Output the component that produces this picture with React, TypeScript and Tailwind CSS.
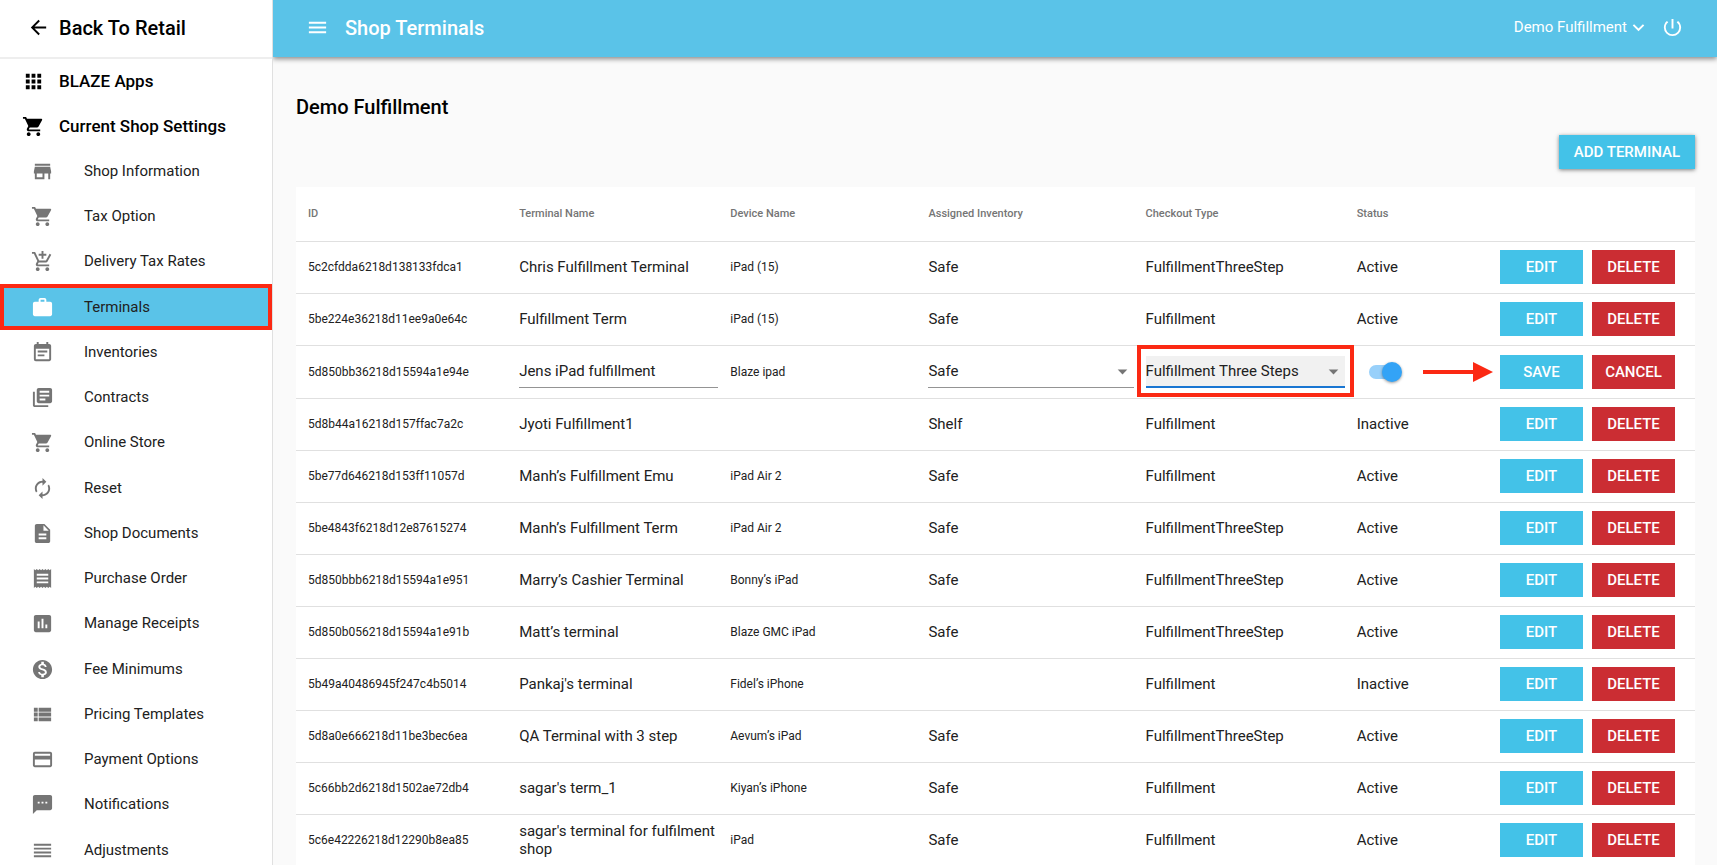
import { useState } from "react";
import type { IconType } from "react-icons";
import {
  MdAddShoppingCart,
  MdApps,
  MdArrowBack,
  MdArrowDropDown,
  MdAutorenew,
  MdDescription,
  MdEventNote,
  MdInsertChart,
  MdKeyboardArrowDown,
  MdLibraryBooks,
  MdMenu,
  MdMonetizationOn,
  MdPayment,
  MdPowerSettingsNew,
  MdReceipt,
  MdReorder,
  MdShoppingCart,
  MdStore,
  MdTextsms,
  MdViewList,
  MdWork,
} from "react-icons/md";

const NAV: { label: string; icon: IconType; active?: boolean }[] = [
  { label: "Shop Information", icon: MdStore },
  { label: "Tax Option", icon: MdShoppingCart },
  { label: "Delivery Tax Rates", icon: MdAddShoppingCart },
  { label: "Terminals", icon: MdWork, active: true },
  { label: "Inventories", icon: MdEventNote },
  { label: "Contracts", icon: MdLibraryBooks },
  { label: "Online Store", icon: MdShoppingCart },
  { label: "Reset", icon: MdAutorenew },
  { label: "Shop Documents", icon: MdDescription },
  { label: "Purchase Order", icon: MdReceipt },
  { label: "Manage Receipts", icon: MdInsertChart },
  { label: "Fee Minimums", icon: MdMonetizationOn },
  { label: "Pricing Templates", icon: MdViewList },
  { label: "Payment Options", icon: MdPayment },
  { label: "Notifications", icon: MdTextsms },
  { label: "Adjustments", icon: MdReorder },
];

const TERMINALS = [
  { id: "5c2cfdda6218d138133fdca1", name: "Chris Fulfillment Terminal", device: "iPad (15)", inventory: "Safe", checkout: "FulfillmentThreeStep", status: "Active" },
  { id: "5be224e36218d11ee9a0e64c", name: "Fulfillment Term", device: "iPad (15)", inventory: "Safe", checkout: "Fulfillment", status: "Active" },
  { id: "5d850bb36218d15594a1e94e", name: "Jens iPad fulfillment", device: "Blaze ipad", inventory: "Safe", checkout: "Fulfillment Three Steps", status: "Active" },
  { id: "5d8b44a16218d157ffac7a2c", name: "Jyoti Fulfillment1", device: "", inventory: "Shelf", checkout: "Fulfillment", status: "Inactive" },
  { id: "5be77d646218d153ff11057d", name: "Manh’s Fulfillment Emu", device: "iPad Air 2", inventory: "Safe", checkout: "Fulfillment", status: "Active" },
  { id: "5be4843f6218d12e87615274", name: "Manh’s Fulfillment Term", device: "iPad Air 2", inventory: "Safe", checkout: "FulfillmentThreeStep", status: "Active" },
  { id: "5d850bbb6218d15594a1e951", name: "Marry’s Cashier Terminal", device: "Bonny’s iPad", inventory: "Safe", checkout: "FulfillmentThreeStep", status: "Active" },
  { id: "5d850b056218d15594a1e91b", name: "Matt’s terminal", device: "Blaze GMC iPad", inventory: "Safe", checkout: "FulfillmentThreeStep", status: "Active" },
  { id: "5b49a40486945f247c4b5014", name: "Pankaj's terminal", device: "Fidel’s iPhone", inventory: "", checkout: "Fulfillment", status: "Inactive" },
  { id: "5d8a0e666218d11be3bec6ea", name: "QA Terminal with 3 step", device: "Aevum’s iPad", inventory: "Safe", checkout: "FulfillmentThreeStep", status: "Active" },
  { id: "5c66bb2d6218d1502ae72db4", name: "sagar's term_1", device: "Kiyan’s iPhone", inventory: "Safe", checkout: "Fulfillment", status: "Active" },
  { id: "5c6e42226218d12290b8ea85", name: "sagar's terminal for fulfilment shop", device: "iPad", inventory: "Safe", checkout: "Fulfillment", status: "Active" },
];

type Terminal = (typeof TERMINALS)[number];

const EDITING_ID = "5d850bb36218d15594a1e94e";

function Sidebar() {
  return (
    <aside className="relative z-20 w-[273px] shrink-0 overflow-hidden border-r border-[#e0e0e0] bg-white">
      <a href="#retail" className="flex h-[59px] items-center border-b-2 border-[#eeeeee] pb-0.5 pl-[27px] text-xl font-medium text-black">
        <MdArrowBack size={23} />
        <span className="ml-[9px]">Back To Retail</span>
      </a>
      <a href="#apps" className="flex h-[45px] items-center pl-[22px] text-[17px] font-medium text-black">
        <MdApps size={23} />
        <span className="ml-[14px]">BLAZE Apps</span>
      </a>
      <a href="#settings" className="flex h-[45px] items-center pl-[22px] text-[17px] font-medium text-black">
        <MdShoppingCart size={23} />
        <span className="ml-[14px]">Current Shop Settings</span>
      </a>
      <nav>
        <ul>
          {NAV.map(({ label, icon: Icon, active }) => (
            <li key={label} className="h-[45px] nth-[4n]:h-[46px]">
              <a
                href={`#${label.toLowerCase().replaceAll(" ", "-")}`}
                className={`relative flex h-full items-center pl-[31px] text-[15px] text-[#212121] ${active ? "bg-[#5ac3e8]" : ""}`}
              >
                <Icon size={23} className={active ? "text-white" : "text-[#757575]"} />
                <span className="ml-[30px]">{label}</span>
                {active && <span className="absolute inset-0 border-4 border-[#fb2913]" />}
              </a>
            </li>
          ))}
        </ul>
      </nav>
    </aside>
  );
}

function ActionButton({ label, danger }: { label: string; danger?: boolean }) {
  return (
    <button className={`h-[34px] w-[83px] text-[15px] font-medium text-white ${danger ? "bg-[#cb2d33]" : "bg-[#43c2e8]"}`}>
      {label}
    </button>
  );
}

function Actions({ editing }: { editing?: boolean }) {
  return (
    <div className="flex justify-end gap-[9px]">
      <ActionButton label={editing ? "SAVE" : "EDIT"} />
      <ActionButton label={editing ? "CANCEL" : "DELETE"} danger />
    </div>
  );
}

function Select({ label, options, focused }: { label: string; options: string[]; focused?: boolean }) {
  return (
    <div className="relative">
      <select
        aria-label={label}
        className={`block h-8 w-full appearance-none pr-6 text-[15px] outline-none ${
          focused ? "border-b-2 border-[#1976d2] bg-[#f1f1f1]" : "border-b border-[#949494]"
        }`}
      >
        {options.map((o) => <option key={o}>{o}</option>)}
      </select>
      <MdArrowDropDown size={23} className="pointer-events-none absolute top-1 right-0 text-[#757575]" />
    </div>
  );
}

function EditRow({ t }: { t: Terminal }) {
  const [name, setName] = useState(t.name);
  const [on, setOn] = useState(true);

  return (
    <tr className="h-[53px] border-b border-[#e0e0e0]">
      <td className="pl-3 text-xs">{t.id}</td>
      <td className="pl-3">
        <input
          aria-label="Terminal Name"
          value={name}
          onChange={(e) => setName(e.target.value)}
          className="block h-8 w-full border-b border-[#949494] text-[15px] outline-none"
        />
      </td>
      <td className="pl-3 text-xs">{t.device}</td>
      <td className="pl-3"><Select label="Assigned Inventory" options={["Safe", "Shelf"]} /></td>
      <td className="relative pl-3">
        <Select label="Checkout Type" options={["Fulfillment Three Steps", "Fulfillment"]} focused />
        <span className="pointer-events-none absolute -top-px -right-[9px] bottom-px left-[3px] z-10 border-4 border-[#fb2913]" />
      </td>
      <td className="relative pl-6">
        <label className="relative flex h-5 w-[34px] cursor-pointer items-center">
          <input type="checkbox" aria-label="Active" checked={on} onChange={() => setOn(!on)} className="peer sr-only" />
          <span className="h-[14px] w-7 rounded-full bg-[#bdbdbd] peer-checked:bg-[#98d0fa]" />
          <span className="absolute left-0 size-5 rounded-full bg-[#fafafa] shadow-[0_1px_3px_rgba(0,0,0,0.4)] peer-checked:left-[13px] peer-checked:bg-[#33a3f6]" />
        </label>
        <svg viewBox="0 0 70 20" className="pointer-events-none absolute top-4 -right-1 h-5 w-[70px]">
          <path d="M0 8h50V0l20 10-20 10v-8H0z" fill="#fb2913" />
        </svg>
      </td>
      <td className="pr-5"><Actions editing /></td>
    </tr>
  );
}

function Row({ t }: { t: Terminal }) {
  return (
    <tr className="h-[52px] border-b border-[#e0e0e0]">
      <td className="pl-3 text-xs">{t.id}</td>
      <td className="pl-3">{t.name}</td>
      <td className="pl-3 text-xs">{t.device}</td>
      <td className="pl-3">{t.inventory}</td>
      <td className="pl-3">{t.checkout}</td>
      <td className="pl-3">{t.status}</td>
      <td className="pr-5"><Actions /></td>
    </tr>
  );
}

export default function App() {
  return (
    <div className="flex h-screen overflow-hidden bg-[#fafafa] font-[Roboto,sans-serif] text-[#212121]">
      <Sidebar />
      <div className="flex min-w-0 flex-1 flex-col">
        <header className="z-10 flex h-[57px] shrink-0 items-center bg-[#5ac3e8] px-[33px] pb-0.5 text-white shadow-[0_2px_5px_rgba(0,0,0,0.45)]">
          <button aria-label="Menu"><MdMenu size={23} /></button>
          <h1 className="ml-4 text-xl font-medium">Shop Terminals</h1>
          <button className="ml-auto flex items-center text-[15px]">
            Demo Fulfillment
            <MdKeyboardArrowDown size={23} />
          </button>
          <button aria-label="Log out" className="ml-[11px]"><MdPowerSettingsNew size={23} /></button>
        </header>

        <main className="flex-1 overflow-y-auto pt-9 pr-[22px] pl-[23px] [scrollbar-width:none]">
          <h2 className="text-xl leading-7 font-medium text-black">Demo Fulfillment</h2>
          <div className="mt-[14px] mb-[18px] flex justify-end">
            <button className="h-[34px] bg-[#43c2e8] px-[15px] text-[15px] font-medium text-white shadow-[0_1px_4px_rgba(0,0,0,0.5)]">
              ADD TERMINAL
            </button>
          </div>

          <table className="w-full table-fixed bg-white text-left text-[15px] leading-[18px]">
            <colgroup>
              <col className="w-[211px]" />
              <col className="w-[211px]" />
              <col className="w-[198px]" />
              <col className="w-[217px]" />
              <col className="w-[211px]" />
              <col className="w-[144px]" />
              <col className="w-[206px]" />
            </colgroup>
            <thead>
              <tr className="h-[54px] border-b border-[#e0e0e0] text-[11px] text-[#757575]">
                <th className="pl-3 font-medium">ID</th>
                <th className="pl-3 font-medium">Terminal Name</th>
                <th className="pl-3 font-medium">Device Name</th>
                <th className="pl-3 font-medium">Assigned Inventory</th>
                <th className="pl-3 font-medium">Checkout Type</th>
                <th className="pl-3 font-medium">Status</th>
                <th aria-label="Actions" />
              </tr>
            </thead>
            <tbody>
              {TERMINALS.map((t) => (t.id === EDITING_ID ? <EditRow key={t.id} t={t} /> : <Row key={t.id} t={t} />))}
            </tbody>
          </table>
        </main>
      </div>
    </div>
  );
}
